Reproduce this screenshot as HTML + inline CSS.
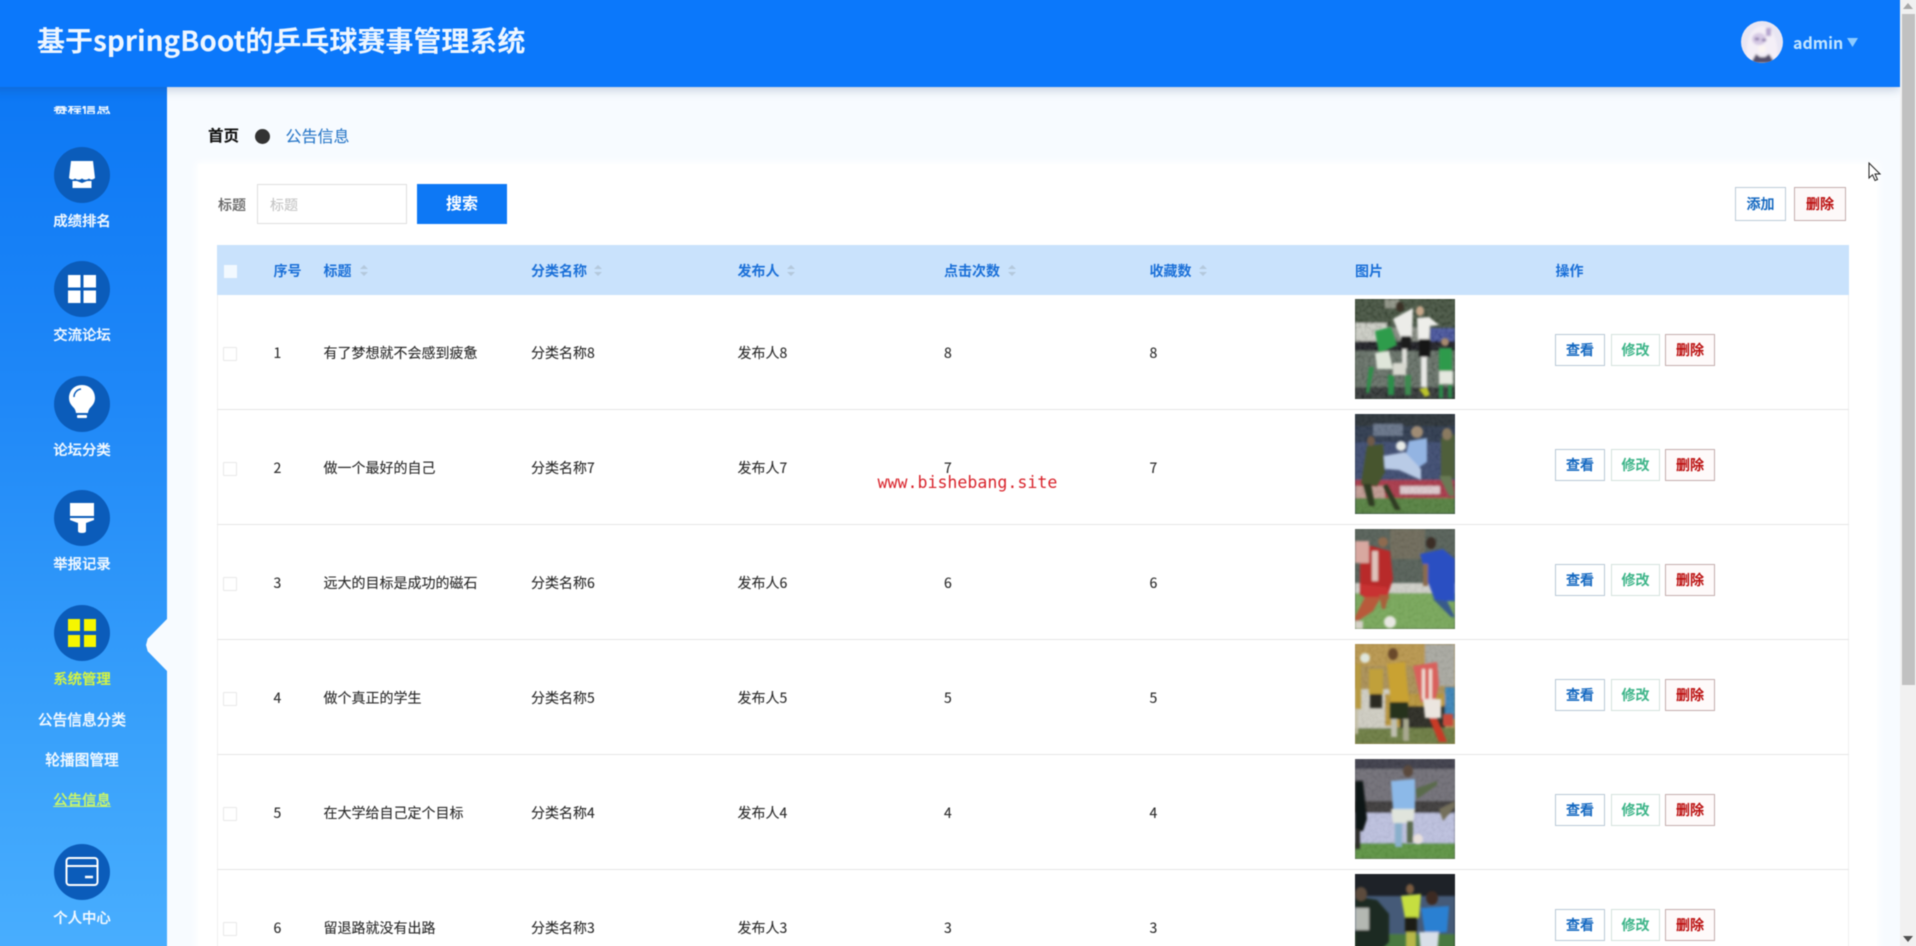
<!DOCTYPE html>
<html lang="zh"><head><meta charset="utf-8"><title>基于springBoot的乒乓球赛事管理系统</title>
<style>
html,body{margin:0;padding:0;width:1916px;height:946px;overflow:hidden;background:#f7fbff}
*{box-sizing:border-box}
#wrap{position:relative;width:1916px;height:946px;overflow:hidden}
#root{position:absolute;left:-10px;top:-10px;width:1936px;height:966px;overflow:hidden;font-family:"Noto Sans CJK SC","Liberation Sans",sans-serif;font-size:14px;color:#2b2b2b;filter:blur(.45px);background:#f7fbff}
#in{position:absolute;left:10px;top:10px;width:1916px;height:946px}
#in>*{position:absolute}
.t{position:absolute;line-height:20px;height:20px;white-space:nowrap;-webkit-text-stroke:.12px currentColor}
.th{font-weight:700;color:#1b70d8;top:261px;-webkit-text-stroke:0}
.lab{position:absolute;left:0;width:164px;text-align:center;color:#f2f9ff;font-weight:500;line-height:20px;font-size:14.4px;-webkit-text-stroke:.25px currentColor}
.c{position:absolute;left:54px;width:56px;height:56px;border-radius:50%;background:#0b5cba}
.cb{position:absolute;left:223px;width:14px;height:14px;border:1px solid #e8e8e8;background:#fff;border-radius:1px}
.b{position:absolute;height:32px;line-height:30px;text-align:center;background:#fff;font-weight:500;font-size:14px;-webkit-text-stroke:.3px currentColor}
.v{left:1555px;width:50px;border:1px solid #b9c9d6;color:#1468c0}
.e{left:1611px;width:49px;border:1px solid #d4e2dc;color:#3cb488}
.d{left:1665px;width:50px;border:1px solid #c4aeae;color:#bb1010;background:#fefafa}
.ln{position:absolute;left:217px;width:1632px;height:1px;background:#e6e6e6}
.s{position:absolute;width:8px;height:11px;top:265px}
.s:before,.s:after{content:"";position:absolute;left:0;border-left:4px solid transparent;border-right:4px solid transparent}
.s:before{top:0;border-bottom:4.5px solid #b4c8dc}
.s:after{bottom:0;border-top:4.5px solid #b4c8dc}
svg{display:block}
</style></head><body>
<div id="wrap"><div id="root"><div id="in">
<!-- panel -->
<div style="left:198px;top:164px;width:1679px;height:800px;background:#fff;box-shadow:0 0 8px 2px #fff"></div>

<!-- breadcrumb -->
<div class="t" style="left:208px;top:125px;font-size:15.5px;font-weight:700;color:#111">首页</div>
<div style="left:255px;top:129px;width:15px;height:15px;border-radius:50%;background:#333"></div>
<div class="t" style="left:285.500px;top:125px;font-size:16px;color:#2a78c8">公告信息</div>

<!-- search -->
<div class="t" style="left:218px;top:195px;color:#666;font-weight:500">标题</div>
<div style="left:257px;top:184px;width:150px;height:40px;border:1px solid #dfdfdf;background:#fff"></div>
<div class="t" style="left:270px;top:195px;color:#c4c4c4">标题</div>
<div style="left:417px;top:184px;width:90px;height:40px;background:#0d78f5;color:#fff;text-align:center;line-height:37px;font-size:16px;font-weight:700">搜索</div>
<div class="b" style="left:1735px;top:187px;width:51px;height:34px;line-height:32px;border:1px solid #bccbd8;color:#1468c0">添加</div>
<div class="b" style="left:1794px;top:187px;width:52px;height:34px;line-height:32px;border:1px solid #c4aeae;color:#bb1010;background:#fdf9f9">删除</div>

<!-- table -->
<div style="left:217px;top:245px;width:1632px;height:50px;background:#c9e2fc"></div>
<div style="left:217px;top:295px;width:1px;height:660px;background:#f0f0f0"></div>
<div style="left:1848px;top:295px;width:1px;height:660px;background:#f0f0f0"></div>
<div style="left:224px;top:265px;width:13px;height:13px;background:#f2f9ff"></div>
<div class="t th" style="left:273.500px">序号</div>
<div class="t th" style="left:323.500px">标题</div><div class="s" style="left:360px"></div>
<div class="t th" style="left:531px">分类名称</div><div class="s" style="left:594px"></div>
<div class="t th" style="left:737.500px">发布人</div><div class="s" style="left:787px"></div>
<div class="t th" style="left:944px">点击次数</div><div class="s" style="left:1008px"></div>
<div class="t th" style="left:1149.500px">收藏数</div><div class="s" style="left:1199px"></div>
<div class="t th" style="left:1355px">图片</div>
<div class="t th" style="left:1555.500px">操作</div>

<div class="ln" style="top:409px"></div><div class="ln" style="top:524px"></div><div class="ln" style="top:639px"></div><div class="ln" style="top:754px"></div><div class="ln" style="top:869px"></div>

<!-- row 1 -->
<div class="cb" style="top:347px"></div><div class="t" style="left:273.500px;top:343px">1</div><div class="t" style="left:323.500px;top:343px">有了梦想就不会感到疲惫</div><div class="t" style="left:531px;top:343px">分类名称8</div><div class="t" style="left:737.500px;top:343px">发布人8</div><div class="t" style="left:944px;top:343px">8</div><div class="t" style="left:1149.500px;top:343px">8</div>
<div class="b v" style="top:334px">查看</div><div class="b e" style="top:334px">修改</div><div class="b d" style="top:334px">删除</div>
<!-- row 2 -->
<div class="cb" style="top:462px"></div><div class="t" style="left:273.500px;top:458px">2</div><div class="t" style="left:323.500px;top:458px">做一个最好的自己</div><div class="t" style="left:531px;top:458px">分类名称7</div><div class="t" style="left:737.500px;top:458px">发布人7</div><div class="t" style="left:944px;top:458px">7</div><div class="t" style="left:1149.500px;top:458px">7</div>
<div class="b v" style="top:449px">查看</div><div class="b e" style="top:449px">修改</div><div class="b d" style="top:449px">删除</div>
<!-- row 3 -->
<div class="cb" style="top:577px"></div><div class="t" style="left:273.500px;top:573px">3</div><div class="t" style="left:323.500px;top:573px">远大的目标是成功的磁石</div><div class="t" style="left:531px;top:573px">分类名称6</div><div class="t" style="left:737.500px;top:573px">发布人6</div><div class="t" style="left:944px;top:573px">6</div><div class="t" style="left:1149.500px;top:573px">6</div>
<div class="b v" style="top:564px">查看</div><div class="b e" style="top:564px">修改</div><div class="b d" style="top:564px">删除</div>
<!-- row 4 -->
<div class="cb" style="top:692px"></div><div class="t" style="left:273.500px;top:688px">4</div><div class="t" style="left:323.500px;top:688px">做个真正的学生</div><div class="t" style="left:531px;top:688px">分类名称5</div><div class="t" style="left:737.500px;top:688px">发布人5</div><div class="t" style="left:944px;top:688px">5</div><div class="t" style="left:1149.500px;top:688px">5</div>
<div class="b v" style="top:679px">查看</div><div class="b e" style="top:679px">修改</div><div class="b d" style="top:679px">删除</div>
<!-- row 5 -->
<div class="cb" style="top:807px"></div><div class="t" style="left:273.500px;top:803px">5</div><div class="t" style="left:323.500px;top:803px">在大学给自己定个目标</div><div class="t" style="left:531px;top:803px">分类名称4</div><div class="t" style="left:737.500px;top:803px">发布人4</div><div class="t" style="left:944px;top:803px">4</div><div class="t" style="left:1149.500px;top:803px">4</div>
<div class="b v" style="top:794px">查看</div><div class="b e" style="top:794px">修改</div><div class="b d" style="top:794px">删除</div>
<!-- row 6 -->
<div class="cb" style="top:922px"></div><div class="t" style="left:273.500px;top:918px">6</div><div class="t" style="left:323.500px;top:918px">留退路就没有出路</div><div class="t" style="left:531px;top:918px">分类名称3</div><div class="t" style="left:737.500px;top:918px">发布人3</div><div class="t" style="left:944px;top:918px">3</div><div class="t" style="left:1149.500px;top:918px">3</div>
<div class="b v" style="top:909px">查看</div><div class="b e" style="top:909px">修改</div><div class="b d" style="top:909px">删除</div>

<!-- photos -->
<svg style="left:1355px;top:299px" width="100" height="100" viewBox="0 0 100 100"><defs><filter id="f" x="-10%" y="-10%" width="120%" height="120%"><feGaussianBlur stdDeviation="1.1"/></filter><filter id="n" x="0" y="0" width="100%" height="100%"><feTurbulence type="fractalNoise" baseFrequency=".3" numOctaves="2" seed="4"/><feColorMatrix type="matrix" values="2 0 0 0 -.5 2 0 0 0 -.5 2 0 0 0 -.5 0 0 0 0 1"/><feGaussianBlur stdDeviation=".6"/></filter><clipPath id="k"><rect width="100" height="100"/></clipPath></defs>
<g clip-path="url(#k)"><rect width="100" height="100" fill="#3c4a3a"/><g filter="url(#f)">
<rect y="0" width="100" height="24" fill="#3d4b37"/><rect x="30" y="0" width="14" height="9" fill="#8a8f80"/><rect y="24" width="32" height="18" fill="#c9cbc2"/><rect x="32" y="28" width="43" height="14" fill="#7d8278"/><rect x="75" y="29" width="25" height="15" fill="#3f4d98"/><rect y="42" width="100" height="11" fill="#17191a"/><rect y="52" width="100" height="38" fill="#5f6a60"/><rect y="88" width="100" height="12" fill="#2b2d2e"/></g>
<rect width="100" height="100" filter="url(#n)" opacity=".12"/><g filter="url(#f)">
<path d="M38 20L58 9 57 38 46 40Z" fill="#ecece8"/><rect x="46" y="37" width="10" height="13" fill="#1f1d1c"/><rect x="47" y="50" width="5" height="19" fill="#dfdfda"/>
<path d="M62 19L74 18 84 26 75 27 74 42 63 41Z" fill="#eeeeea"/><rect x="64" y="40" width="11" height="18" fill="#171717"/><rect x="66" y="58" width="6" height="30" fill="#e9e9e6"/><path d="M64 90L72 88 75 96 70 98Z" fill="#bcc42c"/>
<path d="M20 32L36 28 42 46 30 52 24 55Z" fill="#2d9c4b"/><path d="M20 54L34 52 38 70 22 70Z" fill="#dfe6da"/><path d="M14 68L19 68 14 94 11 94Z" fill="#2f8f48"/><rect x="38" y="64" width="13" height="12" fill="#d8d9d0"/><rect x="33" y="76" width="6" height="20" fill="#2a8f48"/><rect x="50" y="76" width="6" height="20" fill="#3d8a50"/>
<rect x="84" y="49" width="13" height="23" fill="#2f9a4c"/><rect x="84" y="72" width="14" height="13" fill="#e4e8df"/><rect x="84" y="85" width="4" height="14" fill="#2a8a48"/><rect x="93" y="85" width="4" height="14" fill="#2a8a48"/><ellipse cx="90" cy="43" rx="4" ry="4" fill="#a88a70"/><ellipse cx="65" cy="12" rx="4" ry="5" fill="#c7a98c"/><ellipse cx="45" cy="8" rx="4" ry="5" fill="#3a3028"/>
</g></g></svg>

<svg style="left:1355px;top:414px" width="100" height="100" viewBox="0 0 100 100"><g clip-path="url(#k)"><rect width="100" height="100" fill="#2e3a4e"/><g filter="url(#f)">
<rect width="100" height="12" fill="#2a3038"/><rect x="18" y="10" width="30" height="12" fill="#667388"/><rect x="0" y="28" width="100" height="38" fill="#3c4c70"/><rect y="66" width="100" height="18" fill="#a8374a"/><rect x="45" y="72" width="40" height="8" fill="#dcc8cc"/><rect x="0" y="72" width="30" height="12" fill="#c09a92"/><rect y="84" width="100" height="16" fill="#55803f"/></g>
<rect width="100" height="100" filter="url(#n)" opacity=".06"/><g filter="url(#f)">
<path d="M54 27L72 24 72 48 60 56 50 44Z" fill="#93b4e2"/><ellipse cx="62" cy="18" rx="6" ry="6" fill="#a08c74"/><ellipse cx="46" cy="32" rx="5" ry="5" fill="#e8ece8"/><path d="M28 42L50 38 66 55 66 66 44 56 30 55Z" fill="#b9cbe6"/>
<path d="M12 32L28 30 30 58 22 72 6 70Z" fill="#46552f"/><ellipse cx="16" cy="27" rx="4" ry="5" fill="#705a48"/><path d="M8 70L14 92 20 92 16 70ZM28 72L40 96 46 96 32 70Z" fill="#2e3a22"/>
<path d="M86 24L100 20 100 65 86 62Z" fill="#4f5e3a"/><ellipse cx="92" cy="20" rx="5" ry="6" fill="#8a7a60"/><path d="M84 62L94 82 100 82 96 62Z" fill="#697a55"/>
</g></g></svg>

<svg style="left:1355px;top:529px" width="100" height="100" viewBox="0 0 100 100"><g clip-path="url(#k)"><rect width="100" height="100" fill="#566058"/><g filter="url(#f)">
<rect x="35" y="0" width="35" height="30" fill="#6e6a5a"/><rect y="54" width="100" height="11" fill="#cfcfc8"/><rect y="64" width="100" height="36" fill="#78a75a"/></g>
<rect width="100" height="100" filter="url(#n)" opacity=".05"/><g filter="url(#f)">
<path d="M5 14L35 22 38 50 32 68 5 66Z" fill="#b82c2c"/><rect x="17" y="22" width="6" height="30" fill="#dfc4bc"/><rect x="0" y="12" width="14" height="22" fill="#d8a8a0"/><path d="M5 55L32 58 34 70 8 68Z" fill="#c83030"/><path d="M10 68L26 68 18 82 0 94 0 88Z" fill="#b85a3a"/><path d="M24 66L34 66 30 80 27 80Z" fill="#a8603a"/><ellipse cx="28" cy="13" rx="5" ry="5" fill="#8e6a50"/>
<path d="M65 25L88 20 100 30 100 72 80 72 72 50Z" fill="#2a50c2"/><ellipse cx="76" cy="14" rx="5" ry="6" fill="#3a2e28"/><path d="M78 70L92 72 100 88 96 88Z" fill="#385a8c"/><rect x="68" y="35" width="5" height="22" fill="#8a6a50"/>
<ellipse cx="35" cy="93" rx="6" ry="6" fill="#e8e8e2"/><rect x="0" y="92" width="8" height="8" fill="#d5d2c8"/>
</g></g></svg>

<svg style="left:1355px;top:644px" width="100" height="100" viewBox="0 0 100 100"><g clip-path="url(#k)"><rect width="100" height="100" fill="#a98f55"/><g filter="url(#f)">
<rect width="70" height="22" fill="#b8964e"/><rect x="70" width="30" height="42" fill="#a8a8a0"/><rect x="0" y="45" width="40" height="40" fill="#cfcdc2"/><rect x="90" y="43" width="10" height="32" fill="#3a84b8"/><rect x="30" y="50" width="60" height="32" fill="#b8953a"/><rect x="45" y="62" width="45" height="22" fill="#2c2a20"/><rect y="84" width="100" height="16" fill="#6c7c42"/></g>
<rect width="100" height="100" filter="url(#n)" opacity=".06"/><g filter="url(#f)">
<path d="M32 20L50 18 54 58 36 60Z" fill="#c9a232"/><rect x="35" y="58" width="18" height="17" fill="#26301c"/><rect x="36" y="75" width="6" height="18" fill="#c0c0b0"/><rect x="48" y="75" width="6" height="22" fill="#a8a890"/><ellipse cx="38" cy="10" rx="5" ry="6" fill="#6a4a2a"/>
<path d="M58 22L82 18 84 40 80 58 66 58Z" fill="#d9605c"/><rect x="67" y="25" width="3" height="30" fill="#f0e0d8"/><rect x="74" y="25" width="3" height="30" fill="#f0e0d8"/><path d="M68 55L86 55 86 74 70 74Z" fill="#ebe5df"/><path d="M74 74L82 74 92 98 84 98Z" fill="#c83a28"/><rect x="88" y="70" width="10" height="12" fill="#c94a3a"/>
<rect x="14" y="25" width="14" height="25" fill="#c0a03a"/><rect x="15" y="50" width="12" height="14" fill="#2a2c22"/><ellipse cx="10" cy="14" rx="5" ry="5" fill="#dfe6dc"/><rect x="0" y="20" width="6" height="45" fill="#b89a40"/><rect x="0" y="65" width="3" height="25" fill="#c4c0a8"/>
</g></g></svg>

<svg style="left:1355px;top:759px" width="100" height="100" viewBox="0 0 100 100"><g clip-path="url(#k)"><rect width="100" height="100" fill="#65656c"/><g filter="url(#f)">
<rect width="100" height="10" fill="#3c3c48"/><rect y="10" width="100" height="45" fill="#6f6e76"/><rect y="42" width="100" height="13" fill="#3d3a3a"/><rect y="54" width="100" height="30" fill="#bcc0de"/><rect y="84" width="100" height="16" fill="#5c9342"/></g>
<rect width="100" height="100" filter="url(#n)" opacity=".06"/><g filter="url(#f)">
<path d="M36 22L60 20 60 50 38 50Z" fill="#8cb9e8"/><path d="M36 50L60 50 58 64 38 64Z" fill="#e0e4dc"/><ellipse cx="53" cy="12" rx="5" ry="6" fill="#5a4a3c"/><rect x="40" y="64" width="7" height="24" fill="#8ab0cc"/><rect x="52" y="62" width="6" height="22" fill="#5a6a50"/><ellipse cx="63" cy="80" rx="5" ry="5" fill="#e8e0dc"/>
<path d="M0 22L8 22 12 60 8 72 0 72Z" fill="#101412"/><rect x="0" y="70" width="5" height="20" fill="#2c2c28"/><path d="M60 30L82 22 82 26 62 40Z" fill="#5a6a4c"/><path d="M84 50L100 42 100 48 88 62Z" fill="#75705c"/>
</g></g></svg>

<svg style="left:1355px;top:874px" width="100" height="82" viewBox="0 0 100 82"><g><rect width="100" height="82" fill="#1e2228"/><g filter="url(#f)">
<rect y="22" width="100" height="40" fill="#445a78"/><rect y="60" width="100" height="22" fill="#4a7840"/></g>
<g filter="url(#f)">
<path d="M46 22L66 20 64 44 50 44Z" fill="#c6de40"/><rect x="50" y="43" width="12" height="15" fill="#1a1a18"/><rect x="51" y="58" width="10" height="24" fill="#b8b84a"/><ellipse cx="55" cy="15" rx="4" ry="5" fill="#7a5c40"/>
<path d="M66 34L94 32 92 58 70 60Z" fill="#2a80d2"/><path d="M64 58L84 58 82 82 66 82Z" fill="#d8dfe8"/><ellipse cx="77" cy="24" rx="6" ry="7" fill="#3c2c24"/>
<path d="M0 22L22 26 34 40 34 68 20 82 0 82Z" fill="#1a2a20"/><rect x="0" y="34" width="14" height="22" fill="#b4b8b2"/><ellipse cx="6" cy="20" rx="6" ry="7" fill="#5c4c3c"/>
</g></g></svg>

<!-- watermark -->
<div class="t" style="left:877.500px;top:473px;font-family:'DejaVu Sans Mono','Liberation Mono',monospace;font-size:16.600px;color:#d9232b;-webkit-text-stroke:0">www.bishebang.site</div>

<!-- sidebar -->
<div style="left:-10px;top:87px;width:177px;height:880px;background:linear-gradient(180deg,#0d78f5 0%,#1f88f8 35%,#3aa2fb 75%,#4aafff 100%)"></div>
<div style="left:0;top:106px;width:164px;height:8px;overflow:hidden"><div class="lab" style="top:-7px">赛程信息</div></div>
<div style="left:146px;top:619px;width:21px;height:52px;background:#f7fbff;clip-path:polygon(100% 0,100% 100%,8% 62%,0 50%,8% 38%)"></div>

<div class="c" style="top:147px"></div>
<svg style="left:68px;top:160px" width="28" height="29" viewBox="0 0 28 29"><path d="M3 1H25L27 18Q24 21 21 18.500Q17.500 21 14 18.500Q10.500 21 7 18.500Q4 21 1 18Z" fill="#fff"/><path d="M4.500 21H9L14 23 19 21H23.500V28H4.500Z" fill="#fff"/></svg>
<div class="lab" style="top:211px">成绩排名</div>

<div class="c" style="top:261px"></div>
<svg style="left:68px;top:275px" width="28" height="28" viewBox="0 0 28 28" fill="#fff"><rect width="12.500" height="12.500"/><rect x="15.500" width="12.500" height="12.500"/><rect y="15.500" width="12.500" height="12.500"/><rect x="15.500" y="15.500" width="12.500" height="12.500"/></svg>
<div class="lab" style="top:325px">交流论坛</div>

<div class="c" style="top:376px"></div>
<svg style="left:68px;top:384px" width="28" height="36" viewBox="0 0 28 36"><path d="M14 1C6 1 1 7 1 14c0 5 3 8 5 10 1 1 2 4 2 5h12c0-1 1-4 2-5 2-2 5-5 5-10C27 7 22 1 14 1Z" fill="#fff"/><rect x="9" y="31" width="10" height="3" rx="1" fill="#fff"/><path d="M6 13C6 9 9 5.500 13 5" fill="none" stroke="#0b5cba" stroke-width="1.500"/></svg>
<div class="lab" style="top:440px">论坛分类</div>

<div class="c" style="top:490px"></div>
<svg style="left:70px;top:503px" width="24" height="31" viewBox="0 0 24 31" fill="#fff"><rect width="24" height="13"/><path d="M0 15H24V17L16 20V28Q16 30 12 30 8 30 8 28V20L0 17Z"/></svg>
<div class="lab" style="top:554px">举报记录</div>

<div class="c" style="top:605px"></div>
<svg style="left:68px;top:619px" width="28" height="28" viewBox="0 0 28 28" fill="#f6f600"><rect width="12" height="12"/><rect x="16" width="12" height="12"/><rect y="16" width="12" height="12"/><rect x="16" y="16" width="12" height="12"/></svg>
<div class="lab" style="top:669px;color:#d6f53f">系统管理</div>
<div class="lab" style="top:710px;font-size:14.7px">公告信息分类</div>
<div class="lab" style="top:750px;font-size:14.7px">轮播图管理</div>
<div class="lab" style="top:790px;color:#c9f56a;text-decoration:underline">公告信息</div>

<div class="c" style="top:844px"></div>
<svg style="left:65px;top:856px" width="34" height="32" viewBox="0 0 34 32" fill="none" stroke="#fff" stroke-width="2"><rect x="1.500" y="2" width="31" height="27" rx="3"/><path d="M1.500 10H32.500"/><path d="M20 21H28" stroke-width="2.500"/></svg>
<div class="lab" style="top:908px">个人中心</div>

<!-- header -->
<div style="left:-10px;top:-10px;width:1910px;height:97px;background:#0b78fb;box-shadow:0 2px 10px rgba(30,60,110,.28)"></div>
<div class="t" style="left:37px;top:20px;height:40px;line-height:40px;font-size:28px;font-weight:700;color:#eef6ff;-webkit-text-stroke:0">基于springBoot的乒乓球赛事管理系统</div>
<svg style="left:1741px;top:21px" width="42" height="42" viewBox="0 0 42 42"><defs><clipPath id="av"><circle cx="21" cy="21" r="21"/></clipPath></defs><g clip-path="url(#av)"><rect width="42" height="42" fill="#e9e6f3"/><g filter="url(#f)"><path d="M6 42C4 24 8 6 21 5 34 6 38 24 36 42Z" fill="#f4eff7"/><ellipse cx="18" cy="18" rx="7" ry="6" fill="#d6c9e4"/><ellipse cx="16" cy="18" rx="2.500" ry="1.500" fill="#8a7aa8"/><ellipse cx="23" cy="19" rx="2.500" ry="1.500" fill="#8a7aa8"/><ellipse cx="21" cy="28" rx="4" ry="4" fill="#fbf5f2"/><path d="M10 42L15 33 19 36 24 36 28 33 34 42Z" fill="#55506a"/><rect x="25" y="7" width="5" height="8" fill="#b6a6d0"/></g></g></svg>
<div class="t" style="left:1793px;top:32px;font-size:16px;font-weight:700;color:#c2e5ff;-webkit-text-stroke:0">admin</div>
<svg style="left:1847px;top:38px" width="11" height="9" viewBox="0 0 11 9"><path d="M0 0H11L5.500 9Z" fill="#8dcbff"/></svg>

<!-- scrollbar -->
<div style="left:1900px;top:-10px;width:26px;height:966px;background:#f1f1f1"></div>
<div style="left:1902px;top:14px;width:13px;height:671px;background:#c1c1c1"></div>
<svg style="left:1903px;top:3px" width="10" height="6" viewBox="0 0 10 6"><path d="M0 6L5 0 10 6Z" fill="#a8a8a8"/></svg>
<svg style="left:1903px;top:936px" width="10" height="6" viewBox="0 0 10 6"><path d="M0 0L5 6 10 0Z" fill="#505050"/></svg>

<!-- cursor -->
<svg style="left:1868px;top:162px" width="13" height="20" viewBox="0 0 13 20"><path d="M1 1V16L4.500 12.800 7 18.500 9.500 17.500 7 12H12Z" fill="#fff" stroke="#222" stroke-width="1"/></svg>
</div></div></div>
</body></html>
